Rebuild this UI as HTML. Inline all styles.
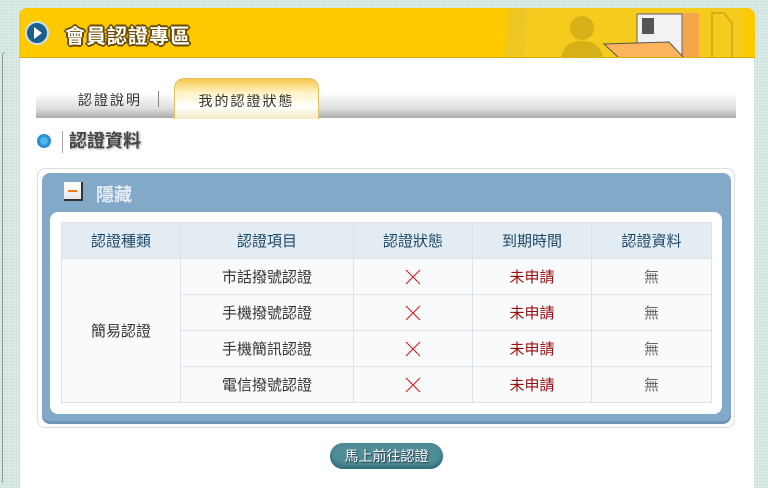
<!DOCTYPE html>
<html><head><meta charset="utf-8"><style>
*{margin:0;padding:0;box-sizing:border-box}
body{width:768px;height:483px;overflow:hidden;background:#dcece6;background-image:radial-gradient(#c9e0d8 0.8px,transparent 0.9px);background-size:3px 3px;font-family:"Liberation Sans","Noto Sans CJK TC",sans-serif;position:relative}
.abs{position:absolute}
.leftline{left:2px;top:52px;width:3px;height:431px;border-left:1px solid #999;border-top:1px solid #999;border-radius:4px 0 0 0}
.panel{left:19px;top:8px;width:735px;height:480px;background:#fff;border-radius:8px 8px 0 0;border-left:1px solid #d8d8d8}
.hdr{left:19px;top:8px;width:736px;height:50px;background:#fdca00;border-radius:8px 8px 0 0;border-bottom:1px solid #d9b000;overflow:hidden}
.ttl{left:65px;top:20px;font-size:20px;font-weight:bold;color:#fff;letter-spacing:1px;text-shadow:-2px 0 #6b4b00,2px 0 #6b4b00,0 -2px #6b4b00,0 2px #6b4b00,-1px -1px #6b4b00,1px 1px #6b4b00,-1px 1px #6b4b00,1px -1px #6b4b00}
.tabbar{left:36px;top:95px;width:700px;height:23px;background:linear-gradient(#fafafa,#ddd 60%,#aaa)}
.tab{left:174px;top:78px;width:145px;height:41px;border-radius:10px 10px 0 0;background:linear-gradient(#f6c84a,#fff3c8 35%,#fff 70%,#f3e8c0);border:1px solid #e0c060;border-bottom:none;font-size:14px;color:#333;text-align:center;line-height:44px;letter-spacing:2px}
.t1{left:78px;top:90px;font-size:14px;color:#333;letter-spacing:2px}
.sep{left:158px;top:91px;width:1px;height:16px;background:#888}
.dot{left:37px;top:134px;width:14px;height:14px;border-radius:50%;background:#4db8ef;border:3px solid #2b8fd0}
.sec{left:62px;top:131px;font-size:18px;font-weight:bold;color:#444;text-shadow:1px 1px 2px #aaa;border-left:1px solid #aaa;padding-left:6px;height:22px;line-height:20px}
.outer{left:37px;top:168px;width:698px;height:260px;border:1px solid #ddd;border-radius:8px}
.blue{left:42px;top:173px;width:689px;height:248px;background:#83a9c9;border-radius:8px;box-shadow:0 3px 0 #6f95b5}
.minus{left:64px;top:182px;width:19px;height:19px;background:linear-gradient(#fff,#e8e8e8);border-right:2px solid #333;border-bottom:2px solid #333}
.minus:after{content:"";position:absolute;left:4px;top:8px;width:9px;height:2px;background:#ef7a1a}
.hide{left:96px;top:181px;font-size:18px;font-weight:bold;color:#e6eef6}
.inner{left:50px;top:212px;width:672px;height:202px;background:#fff;border-radius:8px}
table{position:absolute;left:61px;top:222px;border-collapse:collapse;font-size:15px}
td{border:1px solid #dde2e6;text-align:center;height:36px;background:#f9fafc;color:#333;padding:0}
tr.h td{background:#e2ecf2;color:#1e4868}
.r{color:#9b0d0d}.g{color:#666}
td svg{display:block;margin:auto}
.btn{left:330px;top:443px;width:113px;height:26px;border-radius:13px;background:#4f8c95;box-shadow:inset 0 -3px 4px #2d6a75;color:#fff;font-size:14px;text-align:center;line-height:26px;text-shadow:1px 1px 1px #234}
</style></head><body>
<div class="abs leftline"></div>
<div class="abs panel"></div>
<div class="abs hdr">
 <svg class="abs" style="left:0;top:0" width="736" height="50">
  <circle cx="18" cy="25" r="11" fill="#1b5f8f" stroke="#cfe0ea" stroke-width="2"/>
  <path d="M15 19 L23 25 L15 31Z" fill="#fff"/>
  <path d="M490 0 L510 0 L505 50 L485 50Z" fill="#e8c42a" opacity=".8"/>
  <rect x="505" y="0" width="220" height="50" fill="#f0cc30" opacity=".6"/>
  <circle cx="563" cy="20" r="12" fill="#d6b017"/>
  <path d="M542 50 Q545 33 563 33 Q581 33 584 50Z" fill="#d6b017"/>
  <rect x="620" y="5" width="60" height="45" fill="#f4a64a"/>
  <rect x="618" y="6" width="45" height="44" fill="#f2f2f2" stroke="#666"/>
  <rect x="623" y="10" width="12" height="16" fill="#555"/>
  <path d="M585 36 L650 34 L665 50 L600 50Z" fill="#fbb45c" stroke="#555"/>
  <path d="M693 5 L705 5 L713 15 L713 50 L693 50Z" fill="none" stroke="#d6b017" stroke-width="2"/>
 </svg>
</div>
<div class="abs ttl">會員認證專區</div>
<div class="abs tabbar"></div>
<div class="abs t1">認證說明</div>
<div class="abs sep"></div>
<div class="abs tab">我的認證狀態</div>
<div class="abs dot"></div>
<div class="abs sec">認證資料</div>
<div class="abs outer"></div>
<div class="abs blue"></div>
<div class="abs minus"></div>
<div class="abs hide">隱藏</div>
<div class="abs inner"></div>
<table>
<tr class="h"><td style="width:119px">認證種類</td><td style="width:173px">認證項目</td><td style="width:119px">認證狀態</td><td style="width:119px">到期時間</td><td style="width:120px">認證資料</td></tr>
<tr><td rowspan="4">簡易認證</td><td>市話撥號認證</td><td><svg width="16" height="16"><path d="M1 1L15 15M15 1L1 15" stroke="#d02020" stroke-width="1.1"/></svg></td><td class="r">未申請</td><td class="g">無</td></tr>
<tr><td>手機撥號認證</td><td><svg width="16" height="16"><path d="M1 1L15 15M15 1L1 15" stroke="#d02020" stroke-width="1.1"/></svg></td><td class="r">未申請</td><td class="g">無</td></tr>
<tr><td>手機簡訊認證</td><td><svg width="16" height="16"><path d="M1 1L15 15M15 1L1 15" stroke="#d02020" stroke-width="1.1"/></svg></td><td class="r">未申請</td><td class="g">無</td></tr>
<tr><td>電信撥號認證</td><td><svg width="16" height="16"><path d="M1 1L15 15M15 1L1 15" stroke="#d02020" stroke-width="1.1"/></svg></td><td class="r">未申請</td><td class="g">無</td></tr>
</table>
<div class="abs btn">馬上前往認證</div>
</body></html>
